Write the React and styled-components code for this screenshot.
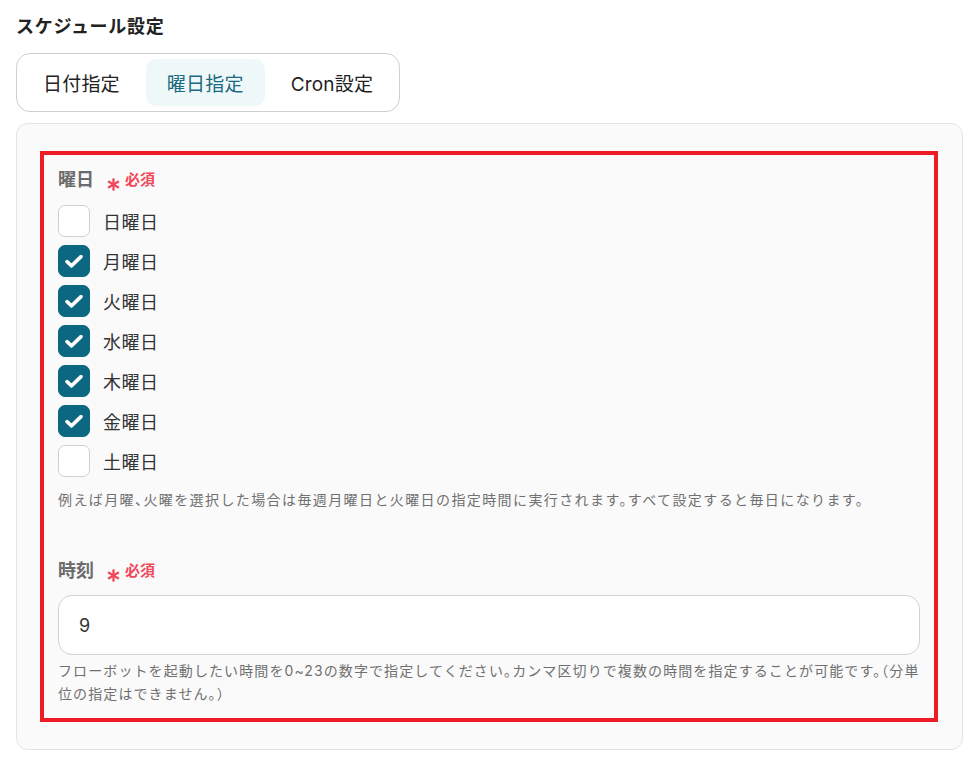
import React from "react";
import styled, { createGlobalStyle } from "styled-components";

const Global = createGlobalStyle`
  html, body { margin: 0; padding: 0; background: #ffffff; }
  body { font-family: "Inter", "Noto Sans CJK JP", sans-serif; color: #222; }
  * { box-sizing: border-box; }
`;

const Page = styled.div`
  padding: 12px 13px 12px 16px;
  width: 976px;
`;

const Title = styled.h2`
  margin: 0;
  font-size: 18px;
  font-weight: 700;
  letter-spacing: 0.04em;
  line-height: 30px;
  color: #222;
`;

const Tabs = styled.div`
  display: inline-flex;
  margin-top: 11px;
  padding: 5px;
  border: 1px solid #cfcfcf;
  border-radius: 14px;
  gap: 5px;
`;

const Tab = styled.button`
  border: none;
  background: ${(p) => (p.$active ? "#eff8f9" : "transparent")};
  color: ${(p) => (p.$active ? "#1a6a80" : "#222")};
  font-family: inherit;
  font-size: 19px;
  letter-spacing: 0.2px;
  height: 47px;
  padding: 0 21px;
  border-radius: 10px;
  cursor: pointer;
`;

const Panel = styled.div`
  margin-top: 11px;
  background: #fafafa;
  border: 1px solid #e4e4e4;
  border-radius: 12px;
  padding: 27px 24px 27px 23px;
`;

const Highlight = styled.div`
  border: 4px solid #ee1c25;
  padding: 12px 14px 13px 14px;
`;

const Label = styled.div`
  display: flex;
  align-items: center;
  gap: 13px;
  font-size: 18px;
  font-weight: 700;
  color: #6b6b6b;
  line-height: 26px;
`;

const Required = styled.span`
  color: #f0485a;
  font-size: 15px;
  font-weight: 700;
  display: inline-flex;
  align-items: center;
  gap: 5px;
`;

const AsteriskIcon = styled.svg`
  width: 13px;
  height: 13px;
  margin-top: 8px;
`;

const CheckList = styled.div`
  display: flex;
  flex-direction: column;
  gap: 8px;
  margin-top: 12px;
`;

const CheckRow = styled.label`
  display: flex;
  align-items: center;
  gap: 13px;
  font-size: 18px;
  letter-spacing: 0.03em;
  color: #333;
  height: 32px;
`;

const Box = styled.span`
  width: 32px;
  height: 32px;
  flex: none;
  border-radius: 7px;
  display: flex;
  align-items: center;
  justify-content: center;
  background: ${(p) => (p.$checked ? "#0b6880" : "#ffffff")};
  border: 1px solid ${(p) => (p.$checked ? "#0b6880" : "#d0d0d0")};
`;

const Help = styled.p`
  margin: 0;
  font-size: 14px;
  letter-spacing: ${(p) => p.$ls || 1.1}px;
  font-feature-settings: "halt";
  line-height: 23px;
  color: #707070;
`;

const Section = styled.div`
  margin-top: ${(p) => p.$mt || 0}px;
`;

const Input = styled.input`
  display: block;
  width: 100%;
  height: 60px;
  margin-top: 11px;
  margin-bottom: 4px;
  border: 1px solid #cfd2d6;
  border-radius: 14px;
  background: #fff;
  padding: 0 20px;
  font-family: inherit;
  font-size: 18px;
  color: #333;
  outline: none;
`;

const Check = () => (
  <svg width="20" height="20" viewBox="0 0 20 20" fill="none">
    <path d="M3 10.6l4.6 4.2L17 5.6" stroke="#fff" strokeWidth="3.6" strokeLinecap="round" strokeLinejoin="round" />
  </svg>
);

const Asterisk = () => (
  <AsteriskIcon viewBox="0 0 12 12" fill="none">
    <g stroke="#f0485a" strokeWidth="2.1" strokeLinecap="butt">
      <path d="M6 0.3v11.4" />
      <path d="M1 3.1l10 5.8" />
      <path d="M1 8.9l10-5.8" />
    </g>
  </AsteriskIcon>
);

const days = [
  ["日曜日", false],
  ["月曜日", true],
  ["火曜日", true],
  ["水曜日", true],
  ["木曜日", true],
  ["金曜日", true],
  ["土曜日", false],
];

export default function App() {
  return (
    <>
      <Global />
      <Page>
        <Title>スケジュール設定</Title>
        <Tabs>
          <Tab>日付指定</Tab>
          <Tab $active>曜日指定</Tab>
          <Tab>Cron設定</Tab>
        </Tabs>
        <Panel>
          <Highlight>
            <Section>
              <Label>
                曜日
                <Required>
                  <Asterisk />
                  必須
                </Required>
              </Label>
              <CheckList>
                {days.map(([d, c]) => (
                  <CheckRow key={d}>
                    <Box $checked={c}>{c && <Check />}</Box>
                    {d}
                  </CheckRow>
                ))}
              </CheckList>
              <Section $mt={11}>
                <Help $ls={1.4}>例えば月曜、火曜を選択した場合は毎週月曜日と火曜日の指定時間に実行されます。すべて設定すると毎日になります。</Help>
              </Section>
            </Section>
            <Section $mt={47}>
              <Label>
                時刻
                <Required>
                  <Asterisk />
                  必須
                </Required>
              </Label>
              <Input defaultValue="9" />
              <Help $ls={1.1}>フローボットを起動したい時間を0~23の数字で指定してください。カンマ区切りで複数の時間を指定することが可能です。（分単位の指定はできません。）</Help>
            </Section>
          </Highlight>
        </Panel>
      </Page>
    </>
  );
}
